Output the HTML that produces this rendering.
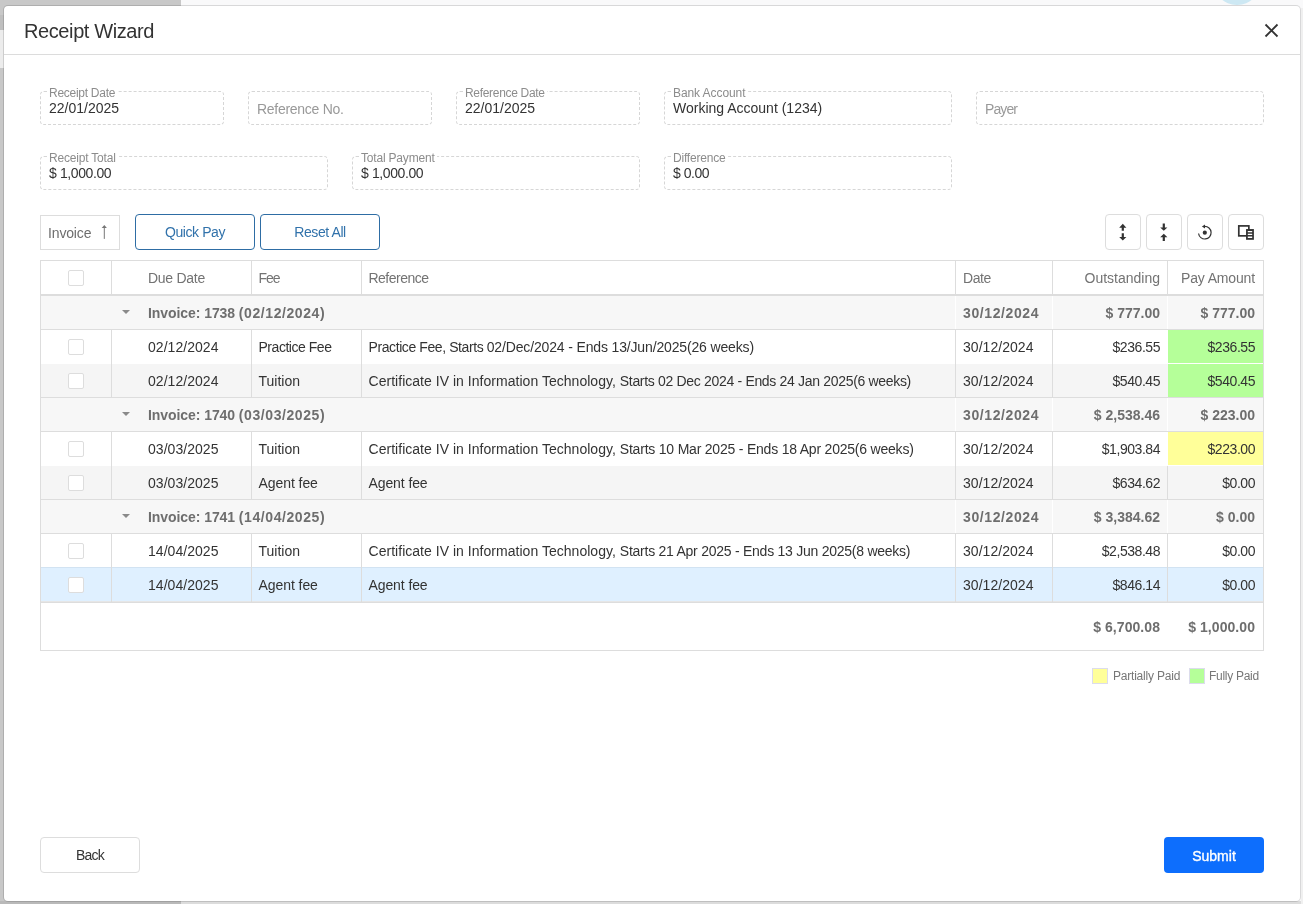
<!DOCTYPE html>
<html lang="en">
<head>
<meta charset="utf-8">
<title>Receipt Wizard</title>
<style>
*{box-sizing:border-box;margin:0;padding:0}
html,body{width:1303px;height:904px;overflow:hidden}
body{position:relative;background:#f9f9fa;font-family:"Liberation Sans",sans-serif;font-size:14px;color:#333}
.abs{position:absolute}
/* page backdrop slivers */
.bg-side{left:0;top:0;width:181px;height:904px;background:#c8c8c8}
.bg-sidebot{left:0;top:901px;width:181px;height:3px;background:#b9b9b9}
.bg-bot{left:181px;top:901px;width:1122px;height:3px;background:#dcdcdc}
.bg-lite{left:0;top:30px;width:4px;height:38px;background:#ececec}
.bg-dk{left:0;top:15px;width:4px;height:15px;background:#bfbfbf}
.bg-right{left:1301px;top:8px;width:2px;height:896px;background:#f0f0f0}
.bg-circle{left:1214.4px;top:-39.9px;width:45.3px;height:45.3px;border-radius:50%;background:#cde8f3}
/* modal */
.modal{left:3px;top:5px;width:1298px;height:897px;background:#fff;background-clip:padding-box;border:1px solid rgba(0,0,0,.13);border-radius:5px}
.hline{left:4px;top:54px;width:1296px;height:1px;background:#dcdcdc}
.title{left:24px;top:14px;line-height:34px;font-size:20px;color:#333;white-space:nowrap;letter-spacing:-.4px}
.close{left:1264px;top:22.5px;width:15px;height:15px}
/* fields */
.field{height:34px;border:1px dashed #d6d6d6;border-radius:4px}
.field .lbl{position:absolute;left:6px;top:-6px;padding:0 2px;background:#fff;font-size:12px;line-height:14px;color:#8c8c8c;white-space:nowrap}
.field .val{position:absolute;left:8px;top:7px;font-size:14px;line-height:18px;color:#333;white-space:nowrap}
.field .ph{position:absolute;left:8px;top:8px;font-size:14px;line-height:18px;color:#999;white-space:nowrap}
/* toolbar */
.sortbtn{left:40px;top:215px;width:80px;height:35px;border:1px solid #ddd;color:#6e6e6e;font-size:14px;line-height:35px;padding-left:7px;white-space:nowrap;letter-spacing:-.15px}
.obtn{top:214px;width:120px;height:36px;border:1px solid #2e6da4;border-radius:4px;color:#3172ab;font-size:14px;line-height:34px;text-align:center;background:#fff}
.ibtn{top:214px;width:36px;height:36px;border:1px solid #ddd;border-radius:4px;background:#fff}
.ibtn svg{position:absolute;left:-1px;top:-1px}
/* grid */
.grid{left:40px;top:260px;width:1224px;height:391px;border:1px solid #ddd;background:#fff}
.row{position:absolute;left:41px;width:1222px;height:34px;display:flex;line-height:34px;white-space:nowrap}
.row>div{height:100%;border-left:1px solid #ddd;padding:0 7px 0 7px;overflow:hidden}
.row>.c0{width:70px;border-left:0;position:relative}
.row>.c1{width:140px;padding-left:36px;letter-spacing:.04px}
.row>.c2{width:110px;padding-left:6.5px}
.row>.c3{width:594px;padding-left:6.5px}
.row>.c4{width:97px;letter-spacing:.04px}
.row>.c5{width:115px;text-align:right;padding-right:7px}
.row>.c6{width:96px;text-align:right;padding-right:8px}
.row>.c5,.row>.c6{letter-spacing:-.45px}
.grp>.c5,.grp>.c6,.hdr>.c5{letter-spacing:0}
.grp>.c4{letter-spacing:.6px}

.hdr{color:#737373}
.alt{background:#f5f5f5}
.sel{background:#dff0ff;box-shadow:inset 0 1px 0 #d2e3f2,inset 0 -1px 0 #e6e6e6;line-height:36px}
.sel .cb{top:10px}
.grp{background:#f7f7f7;font-weight:bold;color:#6e6e6e}
.grp>div{border-left-color:#fff}
.grp>.g0{width:914px;border-left:0;position:relative;padding-left:107px}
.tri{position:absolute;left:81px;top:14px;width:0;height:0;border-left:4px solid transparent;border-right:4px solid transparent;border-top:4px solid #8a8a8a}
.hl{left:41px;width:1222px;height:1px;background:#ddd}
.cb{position:absolute;left:27px;top:9px;width:16px;height:16px;border:1px solid #ddd;border-radius:2px;background:#fff}
.green{background:#b5ff99}
.yellow{background:#ffff99}
.row>.green,.row>.yellow{border-left-color:transparent;background-clip:padding-box}
.row>.wb{border-bottom:1px solid #fff}
.foot{letter-spacing:.06px;font-weight:bold;color:#6e6e6e;font-size:14px;white-space:nowrap;line-height:20px}
/* legend */
.sw{width:16px;height:16px;top:668px;border:1px solid #dcdcec}
.lg{top:668px;font-size:12px;line-height:16px;color:#777;white-space:nowrap}
/* bottom buttons */
.back{left:40px;top:837px;width:100px;height:36px;border:1px solid #ddd;border-radius:4px;background:#fff;color:#333;font-size:14px;line-height:34px;text-align:center;letter-spacing:-.8px}
.submit{left:1164px;top:837px;width:100px;height:36px;border-radius:4px;background:#0d6efd;color:#fff;font-size:14px;line-height:36px;padding-top:1px;text-align:center;-webkit-text-stroke:.35px #fff}
</style>
</head>
<body>
<div class="abs" id="page" style="left:0;top:0;width:1303px;height:904px;overflow:hidden;will-change:transform">
<div class="abs bg-side"></div>
<div class="abs bg-lite"></div>
<div class="abs bg-dk"></div>
<div class="abs bg-sidebot"></div>
<div class="abs bg-bot"></div>
<div class="abs bg-right"></div>
<div class="abs bg-circle"></div>

<div class="abs modal"></div>
<div class="abs hline"></div>
<div class="abs title">Receipt Wizard</div>
<svg class="abs close" viewBox="0 0 15 15"><path d="M1.5 1.5 L13.5 13.5 M13.5 1.5 L1.5 13.5" stroke="#333" stroke-width="1.8" fill="none"/></svg>

<!-- form row 1 -->
<div class="abs field" style="left:40px;top:91px;width:184px"><span class="lbl" style="letter-spacing:-0.27px">Receipt Date</span><span class="val">22/01/2025</span></div>
<div class="abs field" style="left:248px;top:91px;width:184px"><span class="ph" style="letter-spacing:-0.28px">Reference No.</span></div>
<div class="abs field" style="left:456px;top:91px;width:184px"><span class="lbl" style="letter-spacing:-0.31px">Reference Date</span><span class="val">22/01/2025</span></div>
<div class="abs field" style="left:664px;top:91px;width:288px"><span class="lbl" style="letter-spacing:-0.08px">Bank Account</span><span class="val">Working Account (1234)</span></div>
<div class="abs field" style="left:976px;top:91px;width:288px"><span class="ph" style="letter-spacing:-0.9px">Payer</span></div>
<!-- form row 2 -->
<div class="abs field" style="left:40px;top:156px;width:288px"><span class="lbl" style="letter-spacing:-0.19px">Receipt Total</span><span class="val" style="letter-spacing:-0.4px">$ 1,000.00</span></div>
<div class="abs field" style="left:352px;top:156px;width:288px"><span class="lbl" style="letter-spacing:-0.19px">Total Payment</span><span class="val" style="letter-spacing:-0.4px">$ 1,000.00</span></div>
<div class="abs field" style="left:664px;top:156px;width:288px"><span class="lbl" style="letter-spacing:-0.2px">Difference</span><span class="val" style="letter-spacing:-0.47px">$ 0.00</span></div>

<!-- toolbar -->
<div class="abs sortbtn">Invoice</div>
<svg class="abs" width="9" height="16" viewBox="0 0 9 16" style="left:100px;top:224px"><path d="M4.3 1L6.9 3.9H1.7Z" fill="#777"/><path d="M4.3 3.5V14.9" stroke="#777" stroke-width="1" fill="none"/></svg>
<div class="abs obtn" style="left:135px;letter-spacing:-.43px">Quick Pay</div>
<div class="abs obtn" style="left:260px;letter-spacing:-.41px">Reset All</div>

<div class="abs ibtn" style="left:1105px"><svg width="36" height="36" viewBox="0 0 36 36"><path d="M17.8 9.8L21.4 13.8H18.9V16.7H16.7V13.8H14.2ZM16.7 19.3H18.9V23H21.4L17.8 26.5L14.2 23H16.7Z" fill="#333"/></svg></div>
<div class="abs ibtn" style="left:1146px"><svg width="36" height="36" viewBox="0 0 36 36"><path d="M16.7 9.5H18.9V13.4H21.4L17.8 16.7L14.2 13.4H16.7ZM17.8 19.8L21.4 23.2H18.9V26.9H16.7V23.2H14.2Z" fill="#333"/></svg></div>
<div class="abs ibtn" style="left:1187px"><svg width="36" height="36" viewBox="0 0 36 36"><circle cx="17.8" cy="18.7" r="2.1" fill="#333"/><path d="M17.6 12.4A6.3 6.3 0 1 1 11.55 19.5" stroke="#333" stroke-width="1.2" fill="none"/><path d="M14.9 12.5L18 10.6V14.4Z" fill="#333"/></svg></div>
<div class="abs ibtn" style="left:1228px"><svg width="36" height="36" viewBox="0 0 36 36"><rect x="10.8" y="11.9" width="10.05" height="9.95" fill="#fff" stroke="#333" stroke-width="1.7"/><rect x="18.05" y="15.05" width="7.85" height="10.75" fill="#333"/><path d="M19.8 17.05h4.4v1.3h-4.4zM19.8 19.8h4.4v1.3h-4.4zM19.8 22.6h4.4v1.3h-4.4z" fill="#fff"/></svg></div>

<!-- grid -->
<div class="abs grid"></div>

<div class="row hdr" style="top:261px;height:33px">
  <div class="c0"><span class="cb" style="top:9px"></span></div><div class="c1" style="letter-spacing:-.27px">Due Date</div><div class="c2" style="letter-spacing:-1px">Fee</div><div class="c3" style="letter-spacing:-.52px">Reference</div><div class="c4" style="letter-spacing:-.42px">Date</div><div class="c5">Outstanding</div><div class="c6" style="letter-spacing:-.15px">Pay Amount</div>
</div>
<div class="abs hl" style="top:294px;height:2px"></div>

<div class="row grp" style="top:296px;height:33px"><div class="g0"><span class="tri"></span><span style="letter-spacing:-.07px">Invoice: 1738 </span><span style="letter-spacing:.58px">(02/12/2024)</span></div><div class="c4">30/12/2024</div><div class="c5">$ 777.00</div><div class="c6">$ 777.00</div></div>
<div class="abs hl" style="top:329px"></div>
<div class="row" style="top:330px"><div class="c0"><span class="cb"></span></div><div class="c1">02/12/2024</div><div class="c2" style="letter-spacing:-.47px">Practice Fee</div><div class="c3"><span style="letter-spacing:-.41px">Practice Fee, Starts </span><span style="letter-spacing:-.15px">02/Dec/2024 - Ends 13/Jun/2025(26 weeks)</span></div><div class="c4">30/12/2024</div><div class="c5">$236.55</div><div class="c6 green wb">$236.55</div></div>
<div class="row alt" style="top:364px;height:33px"><div class="c0"><span class="cb"></span></div><div class="c1">02/12/2024</div><div class="c2">Tuition</div><div class="c3"><span style="letter-spacing:.03px">Certificate IV in Information Technology, </span><span style="letter-spacing:-.32px">Starts 02 Dec 2024 - Ends 24 Jan 2025(6 weeks)</span></div><div class="c4">30/12/2024</div><div class="c5">$540.45</div><div class="c6 green">$540.45</div></div>
<div class="abs hl" style="top:397px"></div>

<div class="row grp" style="top:398px;height:33px"><div class="g0"><span class="tri"></span><span style="letter-spacing:-.07px">Invoice: 1740 </span><span style="letter-spacing:.58px">(03/03/2025)</span></div><div class="c4">30/12/2024</div><div class="c5">$ 2,538.46</div><div class="c6">$ 223.00</div></div>
<div class="abs hl" style="top:431px"></div>
<div class="row" style="top:432px"><div class="c0"><span class="cb"></span></div><div class="c1">03/03/2025</div><div class="c2">Tuition</div><div class="c3"><span style="letter-spacing:.03px">Certificate IV in Information Technology, </span><span style="letter-spacing:-.21px">Starts 10 Mar 2025 - Ends 18 Apr 2025(6 weeks)</span></div><div class="c4">30/12/2024</div><div class="c5">$1,903.84</div><div class="c6 yellow wb">$223.00</div></div>
<div class="row alt" style="top:466px;height:33px"><div class="c0"><span class="cb"></span></div><div class="c1">03/03/2025</div><div class="c2" style="letter-spacing:-.07px">Agent fee</div><div class="c3" style="letter-spacing:-.1px">Agent fee</div><div class="c4">30/12/2024</div><div class="c5">$634.62</div><div class="c6">$0.00</div></div>
<div class="abs hl" style="top:499px"></div>

<div class="row grp" style="top:500px;height:33px"><div class="g0"><span class="tri"></span><span style="letter-spacing:-.07px">Invoice: 1741 </span><span style="letter-spacing:.58px">(14/04/2025)</span></div><div class="c4">30/12/2024</div><div class="c5">$ 3,384.62</div><div class="c6">$ 0.00</div></div>
<div class="abs hl" style="top:533px"></div>
<div class="row" style="top:534px;height:33px"><div class="c0"><span class="cb"></span></div><div class="c1">14/04/2025</div><div class="c2">Tuition</div><div class="c3"><span style="letter-spacing:.03px">Certificate IV in Information Technology, </span><span style="letter-spacing:-.25px">Starts 21 Apr 2025 - Ends 13 Jun 2025(8 weeks)</span></div><div class="c4">30/12/2024</div><div class="c5">$2,538.48</div><div class="c6">$0.00</div></div>
<div class="row sel" style="top:567px;height:35px"><div class="c0"><span class="cb"></span></div><div class="c1">14/04/2025</div><div class="c2" style="letter-spacing:-.07px">Agent fee</div><div class="c3" style="letter-spacing:-.1px">Agent fee</div><div class="c4">30/12/2024</div><div class="c5">$846.14</div><div class="c6">$0.00</div></div>
<div class="abs hl" style="top:602px"></div>

<div class="abs foot" style="right:143px;top:617px">$ 6,700.08</div>
<div class="abs foot" style="right:48px;top:617px">$ 1,000.00</div>

<!-- legend -->
<div class="abs sw yellow" style="left:1092px"></div><div class="abs lg" style="left:1113px;letter-spacing:-.21px">Partially Paid</div>
<div class="abs sw green" style="left:1189px"></div><div class="abs lg" style="left:1209px;letter-spacing:-.28px">Fully Paid</div>

<!-- buttons -->
<div class="abs back">Back</div>
<div class="abs submit">Submit</div>
</div>
</body>
</html>
